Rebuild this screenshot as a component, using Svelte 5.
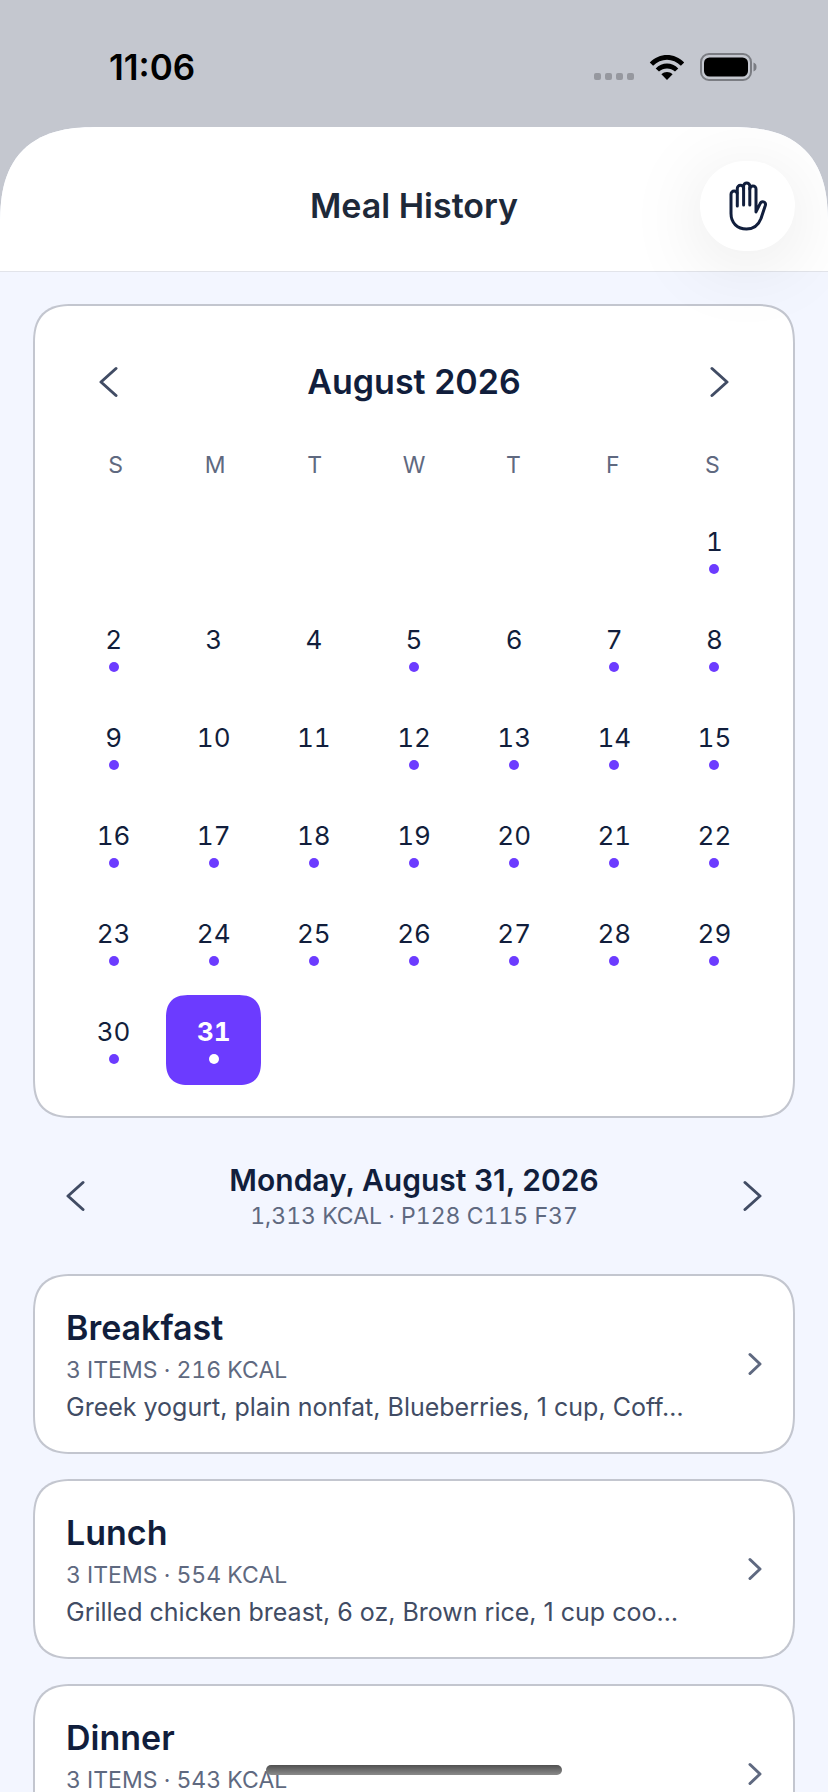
<script lang="ts">
  type Meal = { name: string; items: number; kcal: number; summary: string };

  const weekdays = ['S', 'M', 'T', 'W', 'T', 'F', 'S'];
  const firstWeekday = 6;
  const daysInMonth = 31;
  const emptyDays = [3, 4, 6, 10, 11];

  const meals: Meal[] = [
    { name: 'Breakfast', items: 3, kcal: 216, summary: 'Greek yogurt, plain nonfat, Blueberries, 1 cup, Coff…' },
    { name: 'Lunch', items: 3, kcal: 554, summary: 'Grilled chicken breast, 6 oz, Brown rice, 1 cup coo…' },
    { name: 'Dinner', items: 3, kcal: 543, summary: '' },
  ];

  let selected = $state(31);

  const days = Array.from({ length: daysInMonth }, (_, i) => ({
    date: i + 1,
    logged: !emptyDays.includes(i + 1),
  }));
</script>

{#snippet chevron(dir: 'left' | 'right')}
  <svg class="chevron" viewBox="0 0 20 32" fill="none" stroke="currentColor" stroke-width="3" stroke-linecap="round" stroke-linejoin="round" aria-hidden="true">
    <path d={dir === 'left' ? 'M18 2.500L3 16l15 13.500' : 'M2 2.500l15 13.500L2 29.500'} />
  </svg>
{/snippet}

<div class="screen">
  <div class="status">
    <span class="time">11:06</span>
    <div class="status-icons">
      <svg class="cell" viewBox="0 0 40 7" fill="#96989f" aria-hidden="true">
        <rect x="0" width="7" height="7" rx="2" /><rect x="11" width="7" height="7" rx="2" />
        <rect x="22" width="7" height="7" rx="2" /><rect x="33" width="7" height="7" rx="2" />
      </svg>
      <svg class="wifi" viewBox="0 0 36 26" aria-hidden="true">
        <path d="M0.8 8.6C10.2-1.6 25.8-1.6 35.2 8.6L31.9 11.8C24.2 3.8 11.8 3.8 4.1 11.8Z" />
        <path d="M6.7 14.4C12.9 8 23.1 8 29.3 14.4L26 17.6C21.5 13.3 14.5 13.3 10 17.6Z" />
        <path d="M12.4 20.2C15.6 17.3 20.4 17.3 23.6 20.2L18 26Z" />
      </svg>
      <svg class="battery" viewBox="0 0 57 28" aria-hidden="true">
        <rect x="1" y="1" width="50" height="26" rx="8" fill="none" stroke="#7b7d83" stroke-width="2" />
        <rect x="4" y="4.500" width="44" height="19" rx="5.500" />
        <path d="M53.500 9.500c2.800 1 3 3 3 4.500s-.2 3.500-3 4.500z" fill="#7b7d83" />
      </svg>
    </div>
  </div>

  <main class="sheet">
    <header class="sheet-head">
      <h1>Meal History</h1>
      <button class="hand" aria-label="Gestures">
        <svg viewBox="0 0 38 50" fill="none" stroke="currentColor" stroke-width="3" stroke-linecap="round" stroke-linejoin="round">
          <path d="M8.300 25V13.200a3.100 3.100 0 0 0-6.300 0V32.500C2 42 8.500 48 17.500 48c7.500 0 12-4 14.500-10.500l4.300-13c.6-2-.2-3.200-1.700-3.600-1.600-.4-2.900.3-3.600 2l-4 8V8a3.100 3.100 0 0 0-6.200 0" />
          <path d="M8.300 12V7.500a3.100 3.100 0 0 1 6.300 0V24" />
          <path d="M14.600 8V5a3.100 3.100 0 0 1 6.200 0V24" />
        </svg>
      </button>
    </header>

    <div class="content">
      <section class="card calendar">
        <div class="nav">
          <button class="nav-btn" aria-label="Previous month">{@render chevron('left')}</button>
          <h2>August 2026</h2>
          <button class="nav-btn" aria-label="Next month">{@render chevron('right')}</button>
        </div>
        <div class="weekdays">
          {#each weekdays as day}
            <span>{day}</span>
          {/each}
        </div>
        <div class="days">
          {#each days as day (day.date)}
            <button
              class="day"
              class:selected={day.date === selected}
              style:grid-column-start={day.date === 1 ? firstWeekday + 1 : null}
              aria-pressed={day.date === selected}
              onclick={() => (selected = day.date)}
            >
              <span>{day.date}</span>
              <i class="dot" class:logged={day.logged}></i>
            </button>
          {/each}
        </div>
      </section>

      <div class="nav day-nav">
        <button class="nav-btn" aria-label="Previous day">{@render chevron('left')}</button>
        <div class="summary">
          <h3>Monday, August {selected}, 2026</h3>
          <p class="meta">1,313 KCAL · P128 C115 F37</p>
        </div>
        <button class="nav-btn" aria-label="Next day">{@render chevron('right')}</button>
      </div>

      <div class="meals">
        {#each meals as meal (meal.name)}
          <button class="card meal">
            <span class="meal-text">
              <span class="meal-name">{meal.name}</span>
              <span class="meta">{meal.items} ITEMS · {meal.kcal} KCAL</span>
              <span class="meal-items">{meal.summary}</span>
            </span>
            <svg class="more" viewBox="0 0 14 24" fill="none" stroke="currentColor" stroke-width="3" stroke-linecap="round" stroke-linejoin="round" aria-hidden="true"><path d="M2 2.500l10 9.500L2 21.500" /></svg>
          </button>
        {/each}
      </div>
    </div>
  </main>

  <div class="home-bar"></div>
</div>

<style>
  :global(body) { margin: 0; background: #c4c7cf; }
  .screen {
    height: 100vh; overflow: hidden;
    display: flex; flex-direction: column;
    background: #c4c7cf; color: #111e3c;
    font-family: Inter, 'Liberation Sans', sans-serif;
  }
  h1, h2, h3, p { margin: 0; font-weight: 600; }
  button {
    border: 0; padding: 0; background: none;
    font: inherit; color: inherit; cursor: pointer;
  }
  svg { display: block; }

  .status {
    flex-shrink: 0; box-sizing: border-box; height: 127px;
    padding: 7px 71px 0 109px;
    display: flex; align-items: center; justify-content: space-between;
    color: #000;
  }
  .time { font-size: 35px; line-height: 40px; font-weight: 600; }
  .status-icons { display: flex; align-items: center; gap: 15px; }
  .cell { width: 40px; height: 7px; margin-top: 18px; }
  .wifi { width: 36px; height: 26px; }
  .battery { width: 57px; height: 28px; }

  .sheet {
    flex: 1; min-height: 0;
    display: flex; flex-direction: column;
    background: #f3f6ff;
    border-radius: 80px 80px 0 0;
    overflow: hidden;
  }
  .sheet-head {
    flex-shrink: 0; box-sizing: border-box; height: 145px;
    padding: 13px 33px 0 128px;
    display: flex; align-items: center;
    background: #fff;
    border-bottom: 1px solid #e2e4ea;
  }
  h1 { flex: 1; text-align: center; font-size: 34px; line-height: 40px; color: #1e2939; }
  .hand {
    position: relative; z-index: 1;
    width: 95px; height: 90px; border-radius: 45px;
    display: grid; place-items: center;
    background: #fff;
    box-shadow: 0 12px 80px rgba(0, 0, 0, 0.1);
  }
  .hand svg { width: 38px; height: 50px; }

  .content { flex: 1; min-height: 0; overflow-y: auto; scrollbar-width: none; padding: 32px 33px; }
  .card {
    box-sizing: border-box; width: 100%;
    background: #fff;
    border: 2px solid #c3c6cf;
    border-radius: 32px;
  }
  .calendar { padding: 31px; }
  .nav { display: flex; align-items: center; justify-content: space-between; height: 90px; }
  .nav-btn { width: 84px; height: 90px; display: grid; place-items: center; color: #414c64; }
  .chevron { width: 20px; height: 32px; }
  h2 { font-size: 34px; line-height: 40px; }
  .weekdays {
    display: grid; grid-template-columns: repeat(7, 1fr);
    margin: 23px 0 25px;
    font-size: 23px; line-height: 30px; text-align: center; color: #5f6980;
  }
  .days { display: grid; grid-template-columns: repeat(7, 1fr); gap: 8px 5px; }
  .day {
    height: 90px; border-radius: 20px;
    display: flex; flex-direction: column; align-items: center; justify-content: center; gap: 6px;
    font-size: 26px; line-height: 32px; font-variant-numeric: tabular-nums;
  }
  .dot { width: 10px; height: 10px; border-radius: 50%; }
  .dot.logged { background: #6c3bff; }
  .day.selected { background: #6c3bff; color: #fff; font-weight: 700; }
  .selected .dot.logged { background: #fff; }

  .day-nav { margin: 33px 0; }
  .summary { text-align: center; }
  h3 { font-size: 30px; line-height: 40px; }
  .meta {
    font-size: 23px; line-height: 32px; font-weight: 400; color: #5f6980;
    font-variant-numeric: tabular-nums;
  }

  .meals { display: flex; flex-direction: column; gap: 25px; }
  .meal {
    display: flex; align-items: center; gap: 32px;
    min-height: 180px; padding: 27px 31px;
    text-align: left;
  }
  .meal-text { flex: 1; min-width: 0; display: flex; flex-direction: column; padding-top: 2px; }
  .meal-name { font-size: 34px; line-height: 46px; font-weight: 600; }
  .meal .meta { line-height: 38px; }
  .meal-items {
    min-height: 36px;
    font-size: 25px; line-height: 36px; color: #414c64;
    white-space: nowrap; overflow: hidden; text-overflow: ellipsis;
  }
  .more { width: 14px; height: 24px; color: #5f6980; }

  /* continuous corners where the browser can draw them */
  @supports (corner-shape: superellipse(1.4)) {
    .sheet { border-radius: 100px 100px 0 0; corner-shape: superellipse(1.4); }
    .card { border-radius: 40px; corner-shape: superellipse(1.4); }
    .day { border-radius: 24px; corner-shape: superellipse(1.4); }
  }

  .home-bar {
    position: fixed; bottom: 17px; left: 50%; z-index: 2;
    width: 296px; height: 10px; margin-left: -148px;
    border-radius: 5px;
    background: linear-gradient(#505050, #8a8a8a);
  }
</style>
